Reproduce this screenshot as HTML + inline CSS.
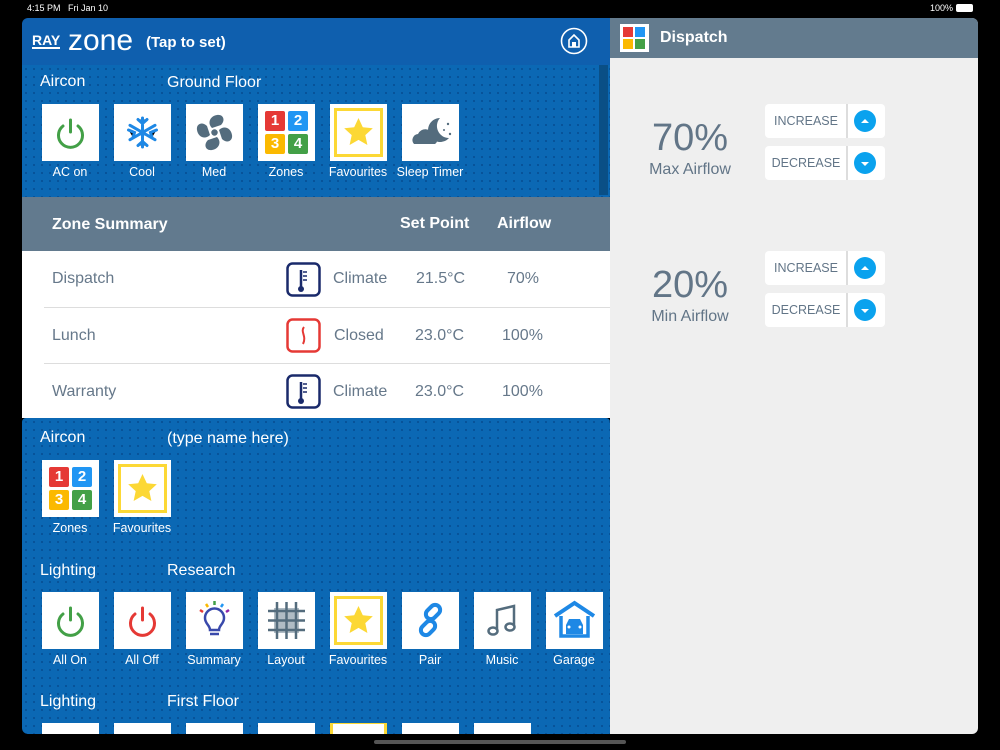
<!DOCTYPE html>
<html><head><meta charset="utf-8"><style>
*{margin:0;padding:0;box-sizing:border-box}
body{width:1000px;height:750px;background:#000;position:relative;overflow:hidden;font-family:"Liberation Sans",sans-serif}
.a{position:absolute}
.blue{background:#0b68b4;background-image:radial-gradient(circle,rgba(0,40,100,.35) 1px,transparent 1.3px);background-size:8px 8px}
.tile{position:absolute;width:57px;height:57px;background:#fff}
.lbl{position:absolute;width:80px;text-align:center;color:#fff;font-size:12.5px}
.h{position:absolute;color:#fff;font-size:16px}
.row{position:absolute;left:22px;width:588px;height:57px;background:#fff;color:#66788a;font-size:16px}
.row span{position:absolute;top:19px}
.sep{position:absolute;left:44px;width:566px;height:1px;background:#ddd}
.btn{position:absolute;width:120px;height:34px;background:#fff;border-radius:4px;color:#627587;font-size:12.5px}
.btn span{position:absolute;left:0;width:82px;top:10px;text-align:center}
.btn i{position:absolute;left:81px;top:0;width:2px;height:34px;background:#ddd}
.btn b{position:absolute;left:89px;top:6px;width:22px;height:22px;border-radius:50%;background:#0aa2ee}
.z{position:absolute;width:20px;height:20px;color:#fff;font-weight:bold;font-size:15px;text-align:center;line-height:20px;border-radius:2px}
</style></head><body>
<div class="a" style="left:27px;top:3px;color:#fff;font-size:9px">4:15 PM&nbsp;&nbsp;&nbsp;Fri Jan 10</div>
<div class="a" style="left:930px;top:3px;color:#fff;font-size:9px">100%</div>
<div class="a" style="left:956px;top:4px;width:17px;height:8px;border:1px solid #fff;border-radius:2px;background:#fff"></div>

<!-- left panel -->
<div class="a" style="left:22px;top:18px;width:588px;height:47px;background:#0f5fae;border-radius:6px 0 0 0"></div>
<div class="a" style="left:32px;top:33px;color:#fff;font-size:14px;font-weight:bold;border-bottom:2px solid #fff;line-height:14px">RAY</div>
<div class="a" style="left:68px;top:24px;color:#fff;font-size:30px;font-weight:normal;letter-spacing:0">zone</div>
<div class="a" style="left:146px;top:34px;color:#fff;font-size:15px;font-weight:bold">(Tap to set)</div>
<svg class="a" style="left:560px;top:27px" width="28" height="28" viewBox="0 0 28 28"><circle cx="14" cy="14" r="12.5" fill="none" stroke="#fff" stroke-width="1.6"/><path d="M9 20V13l5-5 5 5v7z" fill="none" stroke="#fff" stroke-width="1.6"/><rect x="12" y="15" width="4" height="5" fill="#fff"/></svg>

<div class="a blue" style="left:22px;top:65px;width:588px;height:132px"></div>
<div class="a" style="left:599px;top:65px;width:9px;height:130px;background:#0a4f86"></div>
<div class="h" style="left:40px;top:73px">Aircon</div>
<div class="h" style="left:167px;top:74px">Ground Floor</div>

<div class="tile" style="left:42px;top:104px"><svg width="57" height="57"><path d="M21 22a12 12 0 1 0 15 0" fill="none" stroke="#43a047" stroke-width="3" stroke-linecap="round"/><path d="M28.5 16v12" stroke="#43a047" stroke-width="3" stroke-linecap="round"/></svg></div>
<div class="tile" style="left:114px;top:104px"><svg width="57" height="57"><g stroke="#1e88e5" stroke-width="3" stroke-linecap="round"><path d="M28.5 14v29M16 21.3l25 14.4M16 35.7l25-14.4M24 15.5l4.5 4 4.5-4M24 41.5l4.5-4 4.5 4M14.5 26l6 2.5-1.5 5M42.5 26l-6 2.5 1.5 5"/></g></svg></div>
<div class="tile" style="left:186px;top:104px"><svg width="57" height="57"><g fill="#546c7d"><circle cx="28.5" cy="28.5" r="4"/><path d="M26 24c-5-5-2-12 5-13 6-1 9 5 4 10z"/><path d="M33 26c5-5 12-2 13 5 1 6-5 9-10 4z"/><path d="M31 33c5 5 2 12-5 13-6 1-9-5-4-10z"/><path d="M24 31c-5 5-12 2-13-5-1-6 5-9 10-4z"/></g><circle cx="28.5" cy="28.5" r="4" fill="#546c7d" stroke="#fff" stroke-width="1.5"/></svg></div>
<div class="tile" style="left:258px;top:104px"><div class="z" style="left:7px;top:7px;background:#e53935">1</div><div class="z" style="left:30px;top:7px;background:#2196f3">2</div><div class="z" style="left:7px;top:30px;background:#fbb900">3</div><div class="z" style="left:30px;top:30px;background:#43a047">4</div></div>
<div class="tile" style="left:330px;top:104px"><div class="a" style="left:4px;top:4px;width:49px;height:49px;border:3px solid #fcd835"></div><svg class="a" width="57" height="57"><path d="M28.5 14l4.3 9.2 10 1.1-7.5 6.8 2.1 9.9-8.9-5.1-8.9 5.1 2.1-9.9-7.5-6.8 10-1.1z" fill="#fcd835"/></svg></div>
<div class="tile" style="left:402px;top:104px"><svg width="57" height="57"><path d="M38 14a12 12 0 1 0 9 20 12 12 0 0 1-9-20z" fill="#546c7d"/><path d="M12 40a6 6 0 0 1 4-10 8 8 0 0 1 15 1 5 5 0 0 1 2 9z" fill="#546c7d"/><circle cx="46" cy="20" r="1.2" fill="#546c7d"/><circle cx="48" cy="30" r="1.2" fill="#546c7d"/><circle cx="42" cy="26" r="1" fill="#546c7d"/></svg></div>
<div class="lbl" style="left:30px;top:165px">AC on</div>
<div class="lbl" style="left:102px;top:165px">Cool</div>
<div class="lbl" style="left:174px;top:165px">Med</div>
<div class="lbl" style="left:246px;top:165px">Zones</div>
<div class="lbl" style="left:318px;top:165px">Favourites</div>
<div class="lbl" style="left:390px;top:165px">Sleep Timer</div>

<div class="a" style="left:22px;top:197px;width:588px;height:54px;background:#627a8e"></div>
<div class="a" style="left:52px;top:216px;color:#fff;font-size:16px;font-weight:bold">Zone Summary</div>
<div class="a" style="left:400px;top:215px;color:#fff;font-size:16px;font-weight:bold">Set Point</div>
<div class="a" style="left:497px;top:215px;color:#fff;font-size:16px;font-weight:bold">Airflow</div>

<div class="a" style="left:22px;top:251px;width:588px;height:167px;background:#fff"></div>
<div class="row" style="top:251px"><span style="left:30px">Dispatch</span><span style="left:311px">Climate</span><span style="left:394px">21.5°C</span><span style="left:485px">70%</span></div>
<div class="row" style="top:308px"><span style="left:30px">Lunch</span><span style="left:312px">Closed</span><span style="left:393px">23.0°C</span><span style="left:480px">100%</span></div>
<div class="row" style="top:364px;height:54px"><span style="left:30px">Warranty</span><span style="left:311px">Climate</span><span style="left:393px">23.0°C</span><span style="left:480px">100%</span></div>
<div class="sep" style="top:307px"></div>
<div class="sep" style="top:363px"></div>
<svg class="a" style="left:286px;top:262px" width="36" height="36"><rect x="1.5" y="1.5" width="32" height="32" rx="5" fill="none" stroke="#1a2a6b" stroke-width="2.5"/><path d="M15 8v17" stroke="#1a2a6b" stroke-width="2.5"/><circle cx="15" cy="27" r="3" fill="#1a2a6b"/><path d="M17 10h4M17 14h4M17 18h4" stroke="#1a2a6b" stroke-width="1.6"/></svg>
<svg class="a" style="left:286px;top:318px" width="36" height="36"><rect x="1.5" y="1.5" width="32" height="32" rx="5" fill="none" stroke="#e53935" stroke-width="2.5"/><path d="M18 9c-4 5 3 9-1 17" fill="none" stroke="#e53935" stroke-width="2"/></svg>
<svg class="a" style="left:286px;top:374px" width="36" height="36"><rect x="1.5" y="1.5" width="32" height="32" rx="5" fill="none" stroke="#1a2a6b" stroke-width="2.5"/><path d="M15 8v17" stroke="#1a2a6b" stroke-width="2.5"/><circle cx="15" cy="27" r="3" fill="#1a2a6b"/><path d="M17 10h4M17 14h4M17 18h4" stroke="#1a2a6b" stroke-width="1.6"/></svg>

<div class="a blue" style="left:22px;top:418px;width:588px;height:316px;border-radius:4px 4px 0 6px"></div>
<div class="h" style="left:40px;top:429px">Aircon</div>
<div class="h" style="left:167px;top:430px">(type name here)</div>
<div class="tile" style="left:42px;top:460px"><div class="z" style="left:7px;top:7px;background:#e53935">1</div><div class="z" style="left:30px;top:7px;background:#2196f3">2</div><div class="z" style="left:7px;top:30px;background:#fbb900">3</div><div class="z" style="left:30px;top:30px;background:#43a047">4</div></div>
<div class="tile" style="left:114px;top:460px"><div class="a" style="left:4px;top:4px;width:49px;height:49px;border:3px solid #fcd835"></div><svg class="a" width="57" height="57"><path d="M28.5 14l4.3 9.2 10 1.1-7.5 6.8 2.1 9.9-8.9-5.1-8.9 5.1 2.1-9.9-7.5-6.8 10-1.1z" fill="#fcd835"/></svg></div>
<div class="lbl" style="left:30px;top:521px">Zones</div>
<div class="lbl" style="left:102px;top:521px">Favourites</div>

<div class="h" style="left:40px;top:562px">Lighting</div>
<div class="h" style="left:167px;top:562px">Research</div>
<div class="tile" style="left:42px;top:592px"><svg width="57" height="57"><path d="M21 22a12 12 0 1 0 15 0" fill="none" stroke="#43a047" stroke-width="3" stroke-linecap="round"/><path d="M28.5 16v12" stroke="#43a047" stroke-width="3" stroke-linecap="round"/></svg></div>
<div class="tile" style="left:114px;top:592px"><svg width="57" height="57"><path d="M21 22a12 12 0 1 0 15 0" fill="none" stroke="#e53935" stroke-width="3" stroke-linecap="round"/><path d="M28.5 16v12" stroke="#e53935" stroke-width="3" stroke-linecap="round"/></svg></div>
<div class="tile" style="left:186px;top:592px"><svg width="57" height="57"><path d="M24 38c0-5-5-6-5-12a9.5 9.5 0 0 1 19 0c0 6-5 7-5 12z" fill="none" stroke="#3949ab" stroke-width="2.5"/><path d="M24 42h9" stroke="#3949ab" stroke-width="2.5"/><path d="M28.5 9v4" stroke="#43a047" stroke-width="2.5"/><path d="M20 12l2 3" stroke="#fbb900" stroke-width="2.5"/><path d="M37 12l-2 3" stroke="#2196f3" stroke-width="2.5"/><path d="M14 18l3 2" stroke="#e53935" stroke-width="2.5"/><path d="M43 18l-3 2" stroke="#8e24aa" stroke-width="2.5"/></svg></div>
<div class="tile" style="left:258px;top:592px"><svg width="57" height="57"><rect x="16" y="16" width="25" height="25" fill="#b0bcc5"/><g stroke="#546c7d" stroke-width="2.5"><path d="M19 10v37M28.5 10v37M38 10v37M10 19h37M10 28.5h37M10 38h37"/></g></svg></div>
<div class="tile" style="left:330px;top:592px"><div class="a" style="left:4px;top:4px;width:49px;height:49px;border:3px solid #fcd835"></div><svg class="a" width="57" height="57"><path d="M28.5 14l4.3 9.2 10 1.1-7.5 6.8 2.1 9.9-8.9-5.1-8.9 5.1 2.1-9.9-7.5-6.8 10-1.1z" fill="#fcd835"/></svg></div>
<div class="tile" style="left:402px;top:592px"><svg width="57" height="57"><g fill="none" stroke="#1e88e5" stroke-width="4"><rect x="26" y="12" width="10" height="16" rx="5" transform="rotate(45 31 20)"/><rect x="21" y="28" width="10" height="16" rx="5" transform="rotate(45 26 36)"/></g></svg></div>
<div class="tile" style="left:474px;top:592px"><svg width="57" height="57"><g fill="none" stroke="#546c7d" stroke-width="2.5"><path d="M23 38V18l17-4v20"/><ellipse cx="19" cy="39" rx="4.5" ry="3.5"/><ellipse cx="36" cy="35" rx="4.5" ry="3.5"/></g></svg></div>
<div class="tile" style="left:546px;top:592px"><svg width="57" height="57"><path d="M9 24L28.5 11 48 24" fill="none" stroke="#1e88e5" stroke-width="4"/><path d="M15 24v20h27V24" fill="none" stroke="#1e88e5" stroke-width="3.5"/><path d="M20 42v-9l3-6h11l3 6v9z" fill="#1e88e5"/><circle cx="23" cy="35" r="1.5" fill="#fff"/><circle cx="34" cy="35" r="1.5" fill="#fff"/></svg></div>
<div class="lbl" style="left:30px;top:653px">All On</div>
<div class="lbl" style="left:102px;top:653px">All Off</div>
<div class="lbl" style="left:174px;top:653px">Summary</div>
<div class="lbl" style="left:246px;top:653px">Layout</div>
<div class="lbl" style="left:318px;top:653px">Favourites</div>
<div class="lbl" style="left:390px;top:653px">Pair</div>
<div class="lbl" style="left:462px;top:653px">Music</div>
<div class="lbl" style="left:534px;top:653px">Garage</div>

<div class="h" style="left:40px;top:693px">Lighting</div>
<div class="h" style="left:167px;top:693px">First Floor</div>
<div class="tile" style="left:42px;top:723px;height:11px"></div>
<div class="tile" style="left:114px;top:723px;height:11px"></div>
<div class="tile" style="left:186px;top:723px;height:11px"></div>
<div class="tile" style="left:258px;top:723px;height:11px"></div>
<div class="tile" style="left:330px;top:723px;height:11px;border:3px solid #fcd835;border-bottom:none;outline:4px solid #fff;outline-offset:-7px"></div>
<div class="tile" style="left:402px;top:723px;height:11px"></div>
<div class="tile" style="left:474px;top:723px;height:11px"></div>

<!-- right panel -->
<div class="a" style="left:610px;top:18px;width:368px;height:716px;background:#efefef;border-radius:0 6px 6px 0"></div>
<div class="a" style="left:610px;top:18px;width:368px;height:40px;background:#637b8e;border-radius:0 6px 0 0"></div>
<div class="a" style="left:620px;top:24px;width:29px;height:28px;background:#fff"><div class="a" style="left:3px;top:3px;width:10px;height:10px;background:#e53935"></div><div class="a" style="left:15px;top:3px;width:10px;height:10px;background:#2196f3"></div><div class="a" style="left:3px;top:15px;width:10px;height:10px;background:#fbb900"></div><div class="a" style="left:15px;top:15px;width:10px;height:10px;background:#43a047"></div></div>
<div class="a" style="left:660px;top:29px;color:#fff;font-size:16px;font-weight:bold">Dispatch</div>

<div class="a" style="left:640px;top:117px;width:100px;text-align:center;color:#627587;font-size:38px">70%</div>
<div class="a" style="left:630px;top:161px;width:120px;text-align:center;color:#627587;font-size:16px">Max Airflow</div>
<div class="a" style="left:640px;top:264px;width:100px;text-align:center;color:#627587;font-size:38px">20%</div>
<div class="a" style="left:630px;top:308px;width:120px;text-align:center;color:#627587;font-size:16px">Min Airflow</div>

<div class="btn" style="left:765px;top:104px"><span>INCREASE</span><i></i><b></b></div>
<div class="btn" style="left:765px;top:146px"><span>DECREASE</span><i></i><b></b></div>
<div class="btn" style="left:765px;top:251px"><span>INCREASE</span><i></i><b></b></div>
<div class="btn" style="left:765px;top:293px"><span>DECREASE</span><i></i><b></b></div>
<svg class="a" style="left:854px;top:110px" width="22" height="22"><path d="M7 13l4-4 4 4z" fill="#fff"/></svg>
<svg class="a" style="left:854px;top:152px" width="22" height="22"><path d="M7 10l4 4 4-4z" fill="#fff"/></svg>
<svg class="a" style="left:854px;top:257px" width="22" height="22"><path d="M7 13l4-4 4 4z" fill="#fff"/></svg>
<svg class="a" style="left:854px;top:299px" width="22" height="22"><path d="M7 10l4 4 4-4z" fill="#fff"/></svg>

<div class="a" style="left:374px;top:740px;width:252px;height:4px;border-radius:2px;background:#555"></div>
</body></html>
